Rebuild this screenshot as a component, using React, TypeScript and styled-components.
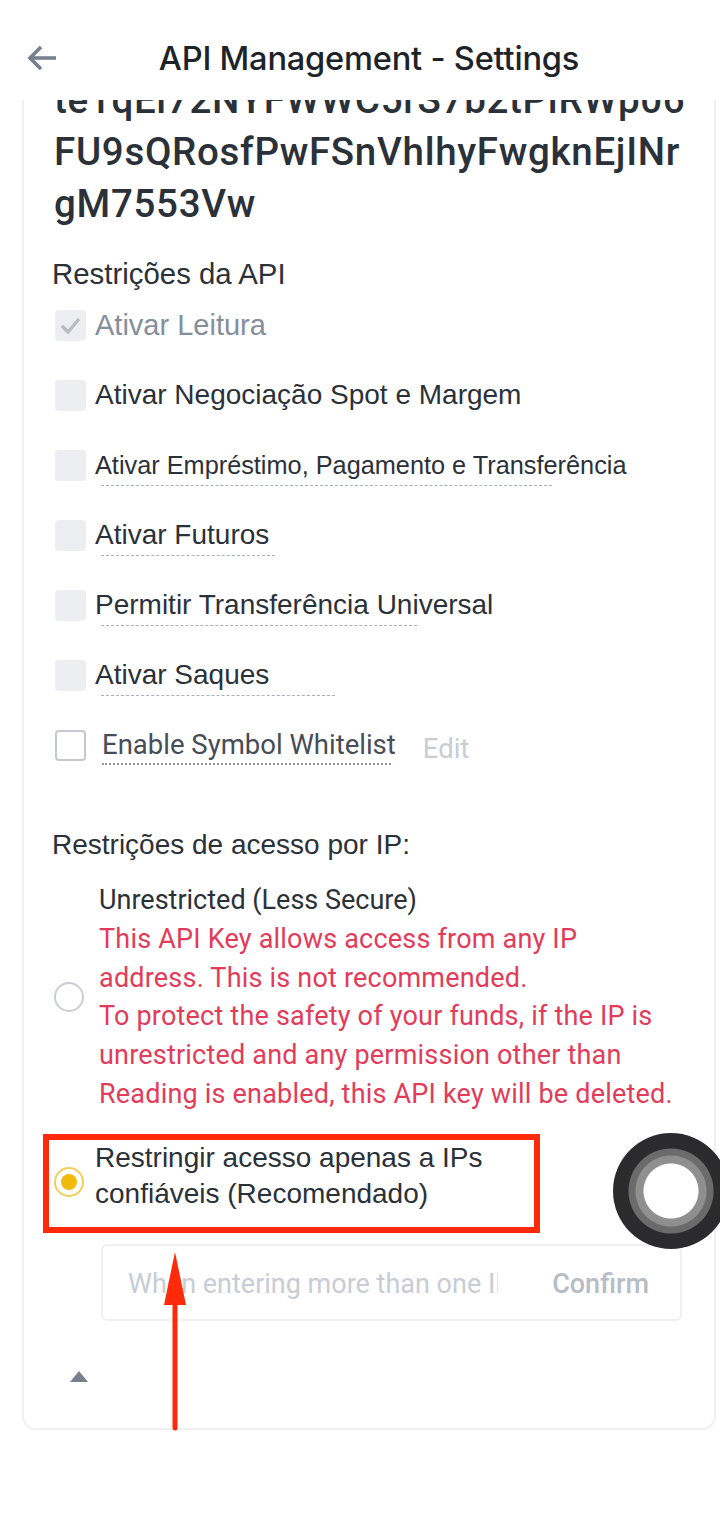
import React from 'react';
import styled, { createGlobalStyle } from 'styled-components';

const GlobalStyle = createGlobalStyle`
  html, body {
    margin: 0;
    padding: 0;
    background: #fff;
  }
  * {
    box-sizing: border-box;
  }
`;

const Page = styled.div`
  position: relative;
  width: 720px;
  height: 1518px;
  overflow: hidden;
  background: #fff;
  font-family: 'Liberation Sans', Arial, sans-serif;
  color: #2b3139;
`;

const Header = styled.header`
  position: relative;
  height: 100px;
  padding-top: 16px;
  display: flex;
  align-items: center;
  justify-content: center;
  background: #fff;
  z-index: 2;
`;

const BackButton = styled.button`
  position: absolute;
  left: 25px;
  top: 41px;
  width: 33px;
  height: 33px;
  padding: 0;
  border: 0;
  background: none;
  color: #76808f;
`;

const Title = styled.h1`
  margin: 0 0 0 18px;
  font-family: Inter, sans-serif;
  font-size: 32.6px;
  font-weight: 500;
  color: #1e2329;
  letter-spacing: -0.2px;
`;

const Card = styled.section`
  height: 1330px;
  margin: 0 4px 0 22px;
  padding: 0 0 0 28px;
  border: 2px solid #eef0f3;
  border-top: 0;
  border-radius: 0 0 14px 14px;
  overflow: hidden;
`;

const ApiKey = styled.div`
  margin: -26px 0 0 2px;
  font-family: 'Roboto', sans-serif;
  font-size: 38.5px;
  font-weight: 500;
  line-height: 52px;
  letter-spacing: 0.7px;
  color: #2b3139;
  white-space: nowrap;
`;

const SectionTitle = styled.h2<{ $top: number; $size?: number }>`
  margin: ${({ $top }) => $top}px 0 0;
  font-size: ${({ $size }) => $size ?? 28}px;
  font-weight: 400;
  line-height: 34px;
  color: #2b3139;
`;

const Options = styled.div`
  margin-top: 16px;
  display: flex;
  flex-direction: column;
`;

const OptionRow = styled.div`
  height: 70px;
  display: flex;
  align-items: center;
  padding-left: 3px;
  &:first-child {
    height: 36px;
    margin-bottom: 17px;
  }
`;

const CheckBox = styled.span<{ $outlined?: boolean }>`
  flex: none;
  width: 31px;
  height: 31px;
  display: flex;
  align-items: center;
  justify-content: center;
  border-radius: 4px;
  background: ${({ $outlined }) => ($outlined ? '#fff' : '#eceef2')};
  border: ${({ $outlined }) => ($outlined ? '2px solid #c4c8d0' : '0')};
  color: #b7bdc6;
`;

const OptionText = styled.span<{ $size?: number; $muted?: boolean; $line?: number }>`
  position: relative;
  margin-left: 9px;
  font-size: ${({ $size }) => $size ?? 28}px;
  line-height: 34px;
  white-space: nowrap;
  color: ${({ $muted }) => ($muted ? '#848e9c' : '#2b3139')};
  ${({ $line }) =>
    $line
      ? `&::after {
    content: '';
    position: absolute;
    left: 6px;
    top: 37px;
    width: ${$line}px;
    border-bottom: 1.5px dashed #aab0ba;
  }`
      : ''}
`;

const WhitelistText = styled.span`
  position: relative;
  margin-left: 16px;
  font-family: 'Roboto', sans-serif;
  font-size: 27.5px;
  line-height: 34px;
  color: #474d57;
  white-space: nowrap;
  &::after {
    content: '';
    position: absolute;
    left: 0;
    right: 5px;
    top: 35px;
    border-bottom: 2px dotted #8f96a3;
  }
`;

const EditLink = styled.span`
  margin: 6px 0 0 27px;
  font-family: 'Roboto', sans-serif;
  font-size: 27.5px;
  color: #c8ccd4;
`;

const RadioRow = styled.div<{ $top: number }>`
  margin-top: ${({ $top }) => $top}px;
  display: flex;
  align-items: center;
  padding-left: 2px;
`;

const Radio = styled.span<{ $active?: boolean }>`
  flex: none;
  width: 30px;
  height: 30px;
  display: flex;
  align-items: center;
  justify-content: center;
  border-radius: 50%;
  border: 2px solid ${({ $active }) => ($active ? '#f0cd5c' : '#c9ced6')};
  background: #fff;
  &::before {
    content: '';
    display: ${({ $active }) => ($active ? 'block' : 'none')};
    width: 16px;
    height: 16px;
    border-radius: 50%;
    background: #f0b90b;
  }
`;

const RadioBody = styled.div`
  margin-left: 15px;
  width: 600px;
  font-family: 'Roboto', sans-serif;
  font-size: 27px;
  line-height: 38.8px;
  color: #2b3139;
`;

const Warning = styled.div`
  color: #e33b5a;
  letter-spacing: 0.2px;
  white-space: nowrap;
`;

const RadioLabel = styled.div`
  margin-left: 11px;
  position: relative;
  top: -6px;
  font-size: 28px;
  line-height: 36px;
  color: #2b3139;
`;

const IpField = styled.div`
  width: 581px;
  height: 77px;
  margin: 26px 0 0 49px;
  padding: 3px 31px 0 25px;
  display: flex;
  align-items: center;
  justify-content: space-between;
  border: 2px solid #eef0f3;
  border-radius: 6px;
  font-family: 'Roboto', sans-serif;
  font-size: 27px;
`;

const Placeholder = styled.span`
  width: 370px;
  overflow: hidden;
  white-space: nowrap;
  color: #c8ccd4;
`;

const ConfirmButton = styled.span`
  font-weight: 500;
  font-size: 27px;
  color: #b7bdc6;
`;

const Caret = styled.div`
  width: 0;
  height: 0;
  margin: 50px 0 0 18px;
  border-left: 9px solid transparent;
  border-right: 9px solid transparent;
  border-bottom: 11px solid #76808f;
`;

const RedBox = styled.div`
  position: absolute;
  left: 43px;
  top: 1134px;
  width: 497px;
  height: 99px;
  border: 6px solid #ff2a0a;
`;

const ArrowMark = styled.svg`
  position: absolute;
  left: 160px;
  top: 1250px;
`;

const AssistiveTouch = styled.div`
  position: absolute;
  left: 613px;
  top: 1133px;
  width: 116px;
  height: 116px;
  border-radius: 50%;
  background: radial-gradient(
    circle,
    #fff 0 27px,
    #8f8f8f 28px 35px,
    #6b6b6b 36px 42px,
    #2b2b2d 43px
  );
`;

const permissions = [
  { label: 'Ativar Negociação Spot e Margem' },
  { label: 'Ativar Empréstimo, Pagamento e Transferência', size: 25.3, line: 451 },
  { label: 'Ativar Futuros', line: 174 },
  { label: 'Permitir Transferência Universal', line: 316 },
  { label: 'Ativar Saques', line: 234 },
];

export default function App() {
  return (
    <Page>
      <GlobalStyle />
      <Header>
        <BackButton aria-label="Voltar">
          <svg width="33" height="33" viewBox="0 0 33 33" fill="none" stroke="currentColor" strokeWidth="3.6">
            <path d="M31 17H5" />
            <path d="M16 6L5 17l11 11" />
          </svg>
        </BackButton>
        <Title>API Management - Settings</Title>
      </Header>
      <Card>
        <ApiKey>
          te1qEi72NYFWWC5rS7b2tPiRWp06
          <br />
          FU9sQRosfPwFSnVhlhyFwgknEjINr
          <br />
          gM7553Vw
        </ApiKey>

        <SectionTitle $top={27} $size={29.4}>
          Restrições da API
        </SectionTitle>
        <Options>
          <OptionRow>
            <CheckBox>
              <svg width="23" height="23" viewBox="0 0 23 23" fill="none" stroke="currentColor" strokeWidth="3.4">
                <path d="M3 12l6 6L20 5" />
              </svg>
            </CheckBox>
            <OptionText $muted $size={29}>
              Ativar Leitura
            </OptionText>
          </OptionRow>
          {permissions.map(item => (
            <OptionRow key={item.label}>
              <CheckBox />
              <OptionText $size={item.size} $line={item.line}>
                {item.label}
              </OptionText>
            </OptionRow>
          ))}
          <OptionRow>
            <CheckBox $outlined />
            <WhitelistText>Enable Symbol Whitelist</WhitelistText>
            <EditLink>Edit</EditLink>
          </OptionRow>
        </Options>

        <SectionTitle $top={48}>Restrições de acesso por IP:</SectionTitle>

        <RadioRow $top={19}>
          <Radio />
          <RadioBody>
            Unrestricted (Less Secure)
            <Warning>
              This API Key allows access from any IP
              <br />
              address. This is not recommended.
              <br />
              To protect the safety of your funds, if the IP is
              <br />
              unrestricted and any permission other than
              <br />
              Reading is enabled, this API key will be deleted.
            </Warning>
          </RadioBody>
        </RadioRow>

        <RadioRow $top={32}>
          <Radio $active />
          <RadioLabel>
            Restringir acesso apenas a IPs
            <br />
            confiáveis (Recomendado)
          </RadioLabel>
        </RadioRow>

        <IpField>
          <Placeholder>When entering more than one IP</Placeholder>
          <ConfirmButton>Confirm</ConfirmButton>
        </IpField>

        <Caret />
      </Card>

      <RedBox />
      <ArrowMark width="30" height="182" viewBox="0 0 30 182">
        <path d="M15 2L26 55H4z" fill="#ff2a0a" />
        <path d="M15 50V178" stroke="#ff2a0a" strokeWidth="5" strokeLinecap="round" />
      </ArrowMark>
      <AssistiveTouch />
    </Page>
  );
}
